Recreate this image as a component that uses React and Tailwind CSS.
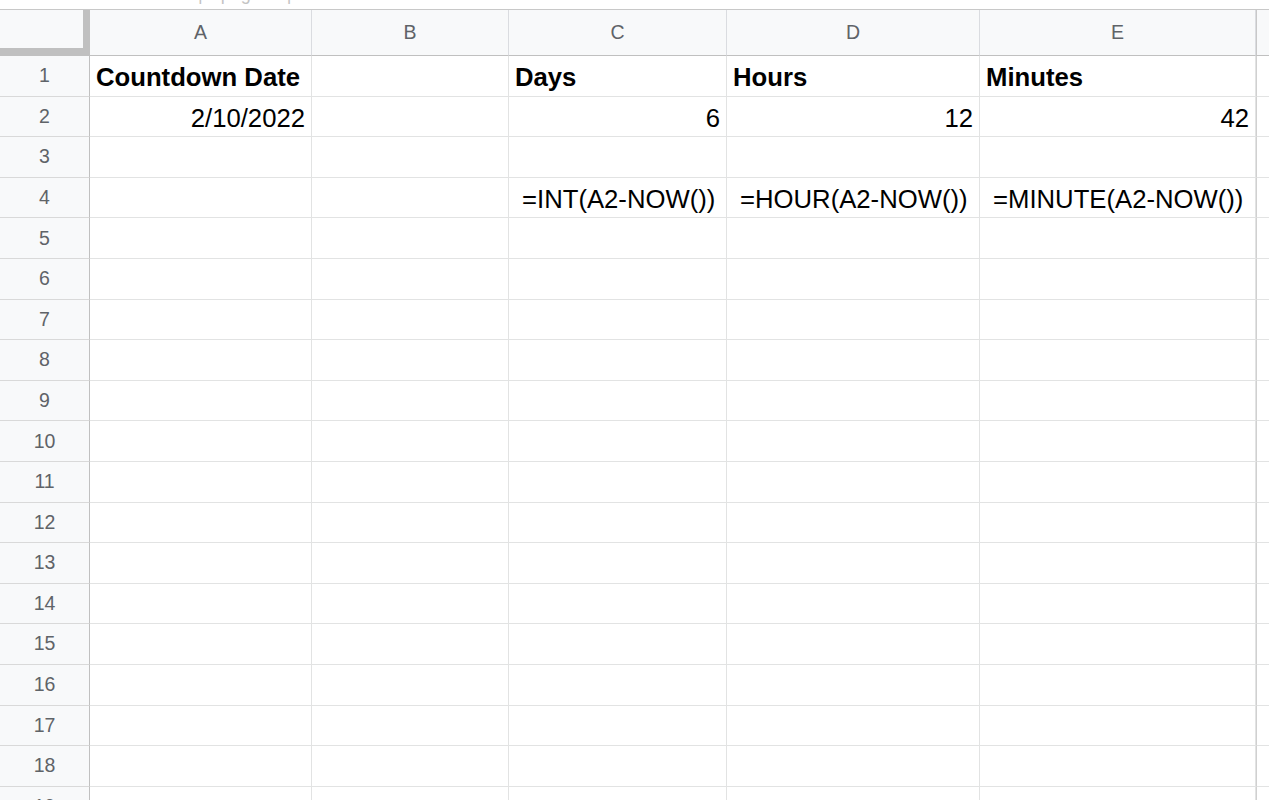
import React from "react";

const columns = [
  { key: "A", width: "w-[222px]" },
  { key: "B", width: "w-[197px]" },
  { key: "C", width: "w-[218px]" },
  { key: "D", width: "w-[253px]" },
  { key: "E", width: "w-[276px]" },
];

const cells = {
  1: {
    A: { text: "Countdown Date", bold: true },
    C: { text: "Days", bold: true },
    D: { text: "Hours", bold: true },
    E: { text: "Minutes", bold: true },
  },
  2: {
    A: { text: "2/10/2022", right: true },
    C: { text: "6", right: true },
    D: { text: "12", right: true },
    E: { text: "42", right: true },
  },
  4: {
    C: { text: "=INT(A2-NOW())", indent: true },
    D: { text: "=HOUR(A2-NOW())", indent: true },
    E: { text: "=MINUTE(A2-NOW())", indent: true },
  },
};

const rows = Array.from({ length: 19 }, (_, i) => i + 1);

function Cell({ col, cell }) {
  return (
    <div
      className={`${col.width} shrink-0 h-full border-r border-b border-[#e2e3e3] flex items-end px-[6px] pb-[5.5px] whitespace-nowrap text-[25.7px] leading-[26px] text-black ${
        cell?.right ? "justify-end" : "justify-start"
      } ${cell?.bold ? "font-bold" : "font-normal"} ${
        cell?.indent ? "pl-[13px]" : ""
      }`}
    >
      {cell?.text}
    </div>
  );
}

export default function App() {
  return (
    <div
      className="w-[1269px] h-[800px] overflow-hidden bg-white"
      style={{ fontFamily: '"Liberation Sans", Arial, sans-serif' }}
    >
      {/* bit of the toolbar above, cut off */}
      <div className="h-[9px] overflow-hidden">
        <div className="flex items-end gap-[18px] pl-[198px] -mt-[16px] text-[18px] leading-[20px] text-[#c4c4c4]">
          <span>|</span>
          <span>page</span>
          <span className="pl-[8px]">|</span>
        </div>
      </div>

      {/* column headers */}
      <div className="flex h-[47px] border-t border-[#c8c8c8]">
        <div className="w-[90px] shrink-0 h-full bg-[#f8f9fa] border-r-[7px] border-b-[8px] border-[#c0c0c0]" />
        {columns.map((col) => (
          <div
            key={col.key}
            className={`${col.width} shrink-0 h-full bg-[#f8f9fa] border-r border-b border-r-[#dadce0] border-b-[#c0c0c0] flex items-center justify-center text-[19.5px] text-[#5f6368]`}
          >
            {col.key}
          </div>
        ))}
        <div className="flex-1 h-full bg-[#f8f9fa] border-l border-b border-l-[#c8c8c8] border-b-[#c0c0c0]" />
      </div>

      {/* grid body */}
      {rows.map((r) => (
        <div key={r} className="flex h-[40.6px]">
          <div className="w-[90px] shrink-0 h-full bg-[#f8f9fa] border-r border-b border-r-[#c0c0c0] border-b-[#d9d9d9] flex items-center justify-center text-[19.5px] text-[#5f6368]">
            {r}
          </div>
          {columns.map((col) => (
            <Cell key={col.key} col={col} cell={cells[r]?.[col.key]} />
          ))}
          <div className="flex-1 h-full border-l border-b border-l-[#d0d0d0] border-b-[#e2e3e3]" />
        </div>
      ))}
    </div>
  );
}
